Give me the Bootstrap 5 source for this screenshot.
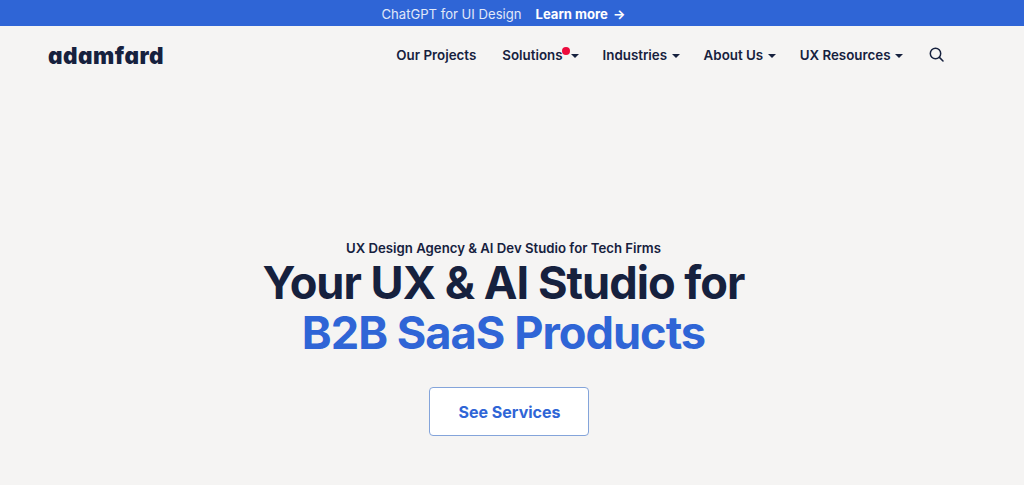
<!DOCTYPE html>
<html lang="en">
<head>
  <meta charset="UTF-8">
  <meta name="viewport" content="width=device-width, initial-scale=1.0">
  <title>adamfard</title>
  <link href="https://cdn.jsdelivr.net/npm/bootstrap@5.3.0/dist/css/bootstrap.min.css" rel="stylesheet">
  <style>
    body { background-color: #f5f4f3; color: #16213e; font-family: Inter, "Liberation Sans", sans-serif; height: 485px; overflow: hidden; }
    .promo-bar { background-color: #2f65d6; height: 26px; color: #fff; font-size: 13.1px; padding: 3px 17px 0 0; gap: 14px; }
    .promo-bar .promo-label { opacity: .85; }
    .promo-bar a { color: #fff; font-weight: 700; text-decoration: none; font-size: 13.1px; }
    .promo-bar a span { margin-left: 2px; }
    .site-nav { height: 58px; padding: 0 80px 0 48px; }
    .brand { color: #16213e; font-size: 22.5px; font-weight: 900; text-decoration: none; font-feature-settings: "cv11"; letter-spacing: .5px; margin-top: 2px; }
    .nav-item-link { color: #16213e; font-size: 13.35px; font-weight: 600; text-decoration: none; white-space: nowrap; position: relative; }
    .nav-caret { display: inline-block; width: 0; height: 0; margin-left: 4.5px; vertical-align: 2px; border-left: 4px solid transparent; border-right: 4px solid transparent; border-top: 4px solid #16213e; }
    .nav-dot { position: absolute; top: 2px; left: 60px; width: 8px; height: 8px; border-radius: 50%; background-color: #ec0a3c; }
    .nav-dot + .nav-caret { margin-left: 8px; }
    .nav-links { gap: 24px; }
    .nav-links > a:first-child { margin-right: 2px; }
    .nav-links > a:last-child { margin-left: 2px; }
    .hero { padding: 154px 37px 0 20px; }
    .hero-sub { font-size: 13.2px; font-weight: 600; margin: 0; line-height: 20px; }
    .hero-title { font-size: 45.2px; font-weight: 700; line-height: 50px; letter-spacing: -1px; margin: 0; color: #16213e; }
    .hero-title span { color: #2f65d6; display: block; }
    .btn-services { width: 160px; height: 49px; margin: 29px 0 0 10px; padding-left: 14px; background-color: #fff; color: #2f65d6; border: 1px solid #84a4da; border-radius: 4px; font-size: 16px; font-weight: 700; }
  </style>
</head>
<body>
  <div class="promo-bar d-flex justify-content-center align-items-center">
    <span class="promo-label">ChatGPT for UI Design</span>
    <a href="#">Learn more <span>&#8594;</span></a>
  </div>

  <nav class="site-nav d-flex justify-content-between align-items-center">
    <a class="brand" href="#">adamfard</a>
    <div class="nav-links d-flex align-items-center">
      <a class="nav-item-link" href="#">Our Projects</a>
      <a class="nav-item-link" href="#">Solutions<span class="nav-dot"></span><span class="nav-caret"></span></a>
      <a class="nav-item-link" href="#">Industries<span class="nav-caret"></span></a>
      <a class="nav-item-link" href="#">About Us<span class="nav-caret"></span></a>
      <a class="nav-item-link" href="#">UX Resources<span class="nav-caret"></span></a>
      <a class="nav-item-link d-flex" href="#" aria-label="Search">
        <svg width="15" height="15" viewBox="0 0 15 15" fill="none" stroke="#16213e" stroke-width="1.5" stroke-linecap="round"><circle cx="6.5" cy="6.5" r="5.2"/><path d="M10.4 10.4 14 14"/></svg>
      </a>
    </div>
  </nav>

  <section class="hero text-center">
    <p class="hero-sub">UX Design Agency &amp; AI Dev Studio for Tech Firms</p>
    <h1 class="hero-title">Your UX &amp; AI Studio for <span>B2B SaaS Products</span></h1>
    <button class="btn btn-services" type="button">See Services</button>
  </section>

  <script src="https://cdn.jsdelivr.net/npm/bootstrap@5.3.0/dist/js/bootstrap.bundle.min.js"></script>
</body>
</html>
